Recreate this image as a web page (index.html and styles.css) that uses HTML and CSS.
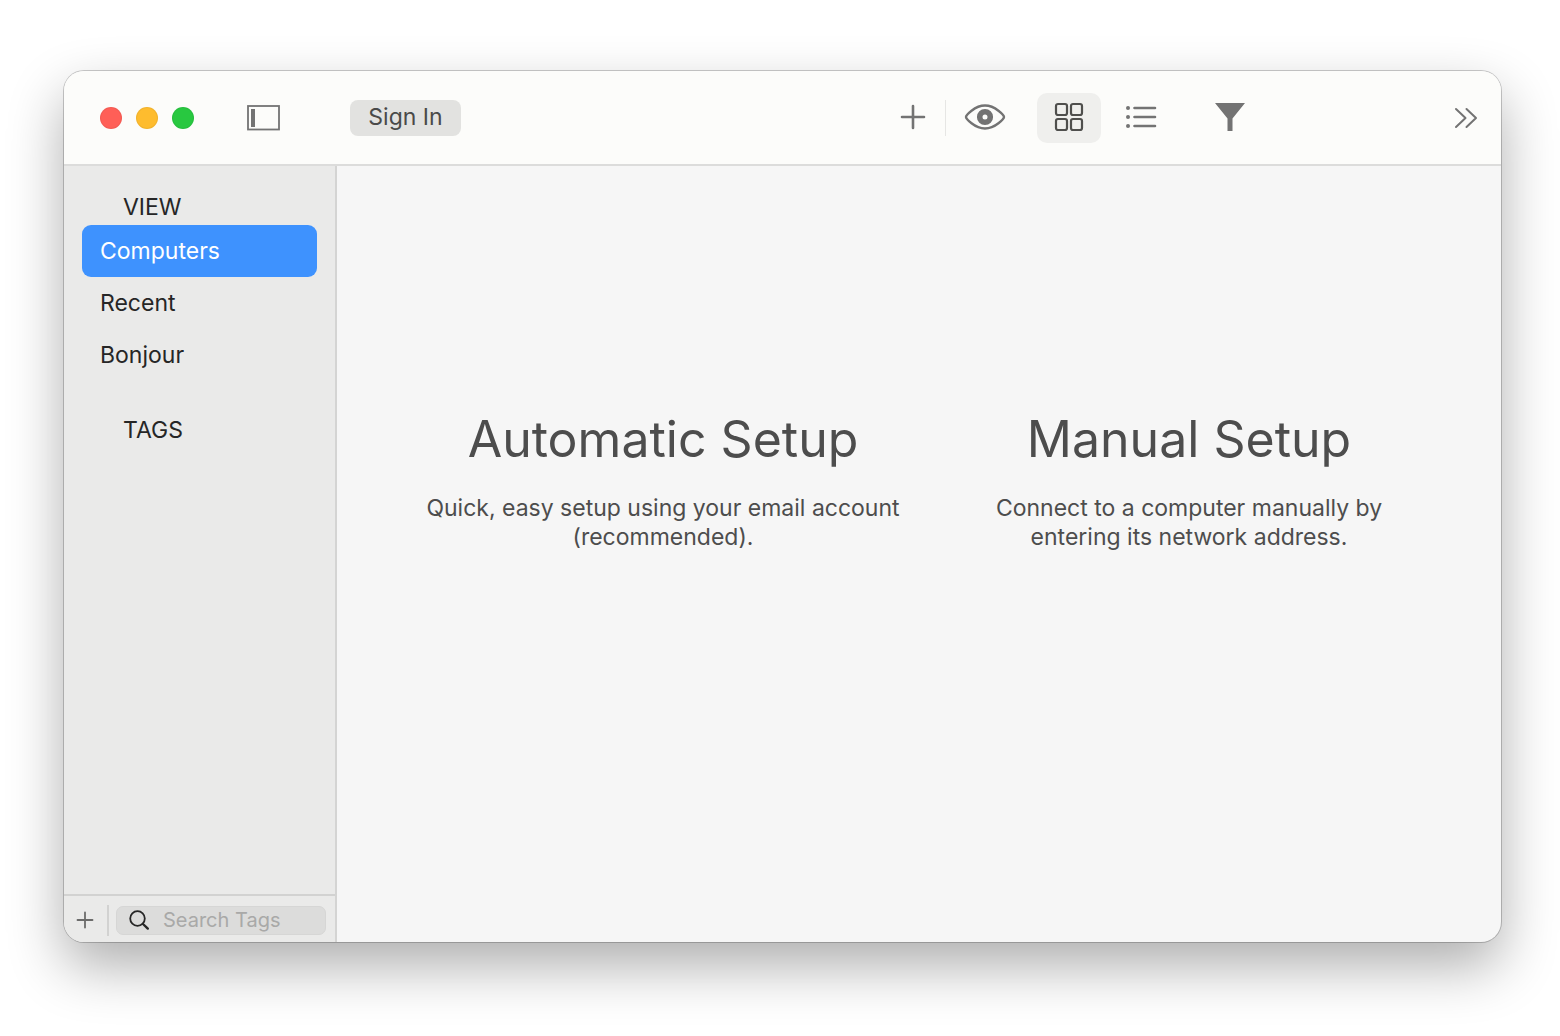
FILE: index.html
```html
<!DOCTYPE html>
<html lang="en">
<head>
<meta charset="utf-8">
<meta name="viewport" content="width=device-width, initial-scale=1">
<title>Computers</title>
<link rel="stylesheet" href="styles.css">
</head>
<body>
<div class="window">
  <header class="toolbar">
    <div class="lights">
      <button class="light light-close" type="button" aria-label="Close"></button>
      <button class="light light-minimize" type="button" aria-label="Minimize"></button>
      <button class="light light-zoom" type="button" aria-label="Zoom"></button>
    </div>
    <button class="tool tool-sidebar" type="button" aria-label="Toggle sidebar">
      <svg width="34" height="26" viewBox="0 0 34 26" fill="none"><rect x="1" y="1" width="31" height="23.500" stroke="#737373" stroke-width="1.800"/><rect x="4" y="4" width="4" height="18" fill="#737373"/></svg>
    </button>
    <button class="sign-in" type="button">Sign In</button>
    <div class="space-wide"></div>
    <button class="tool tool-small" type="button" aria-label="Add">
      <svg width="26" height="26" viewBox="0 0 26 26" fill="none" stroke="#737373" stroke-width="2.600" stroke-linecap="round"><path d="M13 2v22M2 13h22"/></svg>
    </button>
    <div class="divider"></div>
    <button class="tool tool-eye" type="button" aria-label="Observe">
      <svg width="42" height="28" viewBox="0 0 42 28" fill="none" stroke="#737373"><path d="M2 14C2 12.500 10.500 2.500 21 2.500S40 12.500 40 14 31.500 25.500 21 25.500 2 15.500 2 14Z" stroke-width="2.400"/><circle cx="21" cy="14" r="5.300" stroke-width="5.600"/></svg>
    </button>
    <button class="tool tool-view is-active" type="button" aria-label="Icon view" aria-pressed="true">
      <svg width="30" height="30" viewBox="0 0 30 30" fill="none" stroke="#4f4f4d" stroke-width="2.200"><rect x="2" y="2" width="11" height="11" rx="2"/><rect x="17" y="2" width="11" height="11" rx="2"/><rect x="2" y="17" width="11" height="11" rx="2"/><rect x="17" y="17" width="11" height="11" rx="2"/></svg>
    </button>
    <button class="tool tool-view" type="button" aria-label="List view" aria-pressed="false">
      <svg width="32" height="24" viewBox="0 0 32 24" fill="none" stroke="#737373" stroke-width="2.600" stroke-linecap="round"><path d="M9.500 3H30M9.500 12H30M9.500 21H30"/><path stroke-width="4" d="M3 3h.01M3 12h.01M3 21h.01"/></svg>
    </button>
    <button class="tool tool-filter" type="button" aria-label="Filter">
      <svg width="32" height="30" viewBox="0 0 32 30"><path fill="#737373" d="M1 1h30L18.500 16.500V29h-5V16.500Z"/></svg>
    </button>
    <div class="space-narrow"></div>
    <button class="tool tool-small" type="button" aria-label="More toolbar items">
      <svg width="24" height="24" viewBox="0 -2 24 24" fill="none" stroke="#737373" stroke-width="2" stroke-linecap="round" stroke-linejoin="round"><path d="M2 2l9.500 9L2 20M12.500 2l9.500 9-9.500 9"/></svg>
    </button>
  </header>
  <div class="content">
    <aside class="sidebar">
      <nav class="lists">
        <h2 class="list-title">VIEW</h2>
        <ul class="list">
          <li><a class="row is-selected" href="#computers" aria-current="page">Computers</a></li>
          <li><a class="row" href="#recent">Recent</a></li>
          <li><a class="row" href="#bonjour">Bonjour</a></li>
        </ul>
        <h2 class="list-title">TAGS</h2>
      </nav>
      <div class="tag-bar">
        <button class="tag-add" type="button" aria-label="Add tag">
          <svg width="18" height="18" viewBox="0 0 18 18" fill="none" stroke="#6b6b6a" stroke-width="1.800" stroke-linecap="round"><path d="M9 1.500v15M1.500 9h15"/></svg>
        </button>
        <label class="search">
          <svg width="22" height="22" viewBox="0 0 22 22" fill="none" stroke="#262626" stroke-linecap="round"><circle cx="9.500" cy="9.500" r="7.300" stroke-width="1.800"/><path stroke-width="2.400" d="M15 15l4.800 4.600"/></svg>
          <input class="search-input" type="text" placeholder="Search Tags" aria-label="Search Tags">
        </label>
      </div>
    </aside>
    <main class="setup">
      <section class="option">
        <h1 class="option-title">Automatic Setup</h1>
        <p class="option-text">Quick, easy setup using your email account (recommended).</p>
      </section>
      <section class="option">
        <h1 class="option-title">Manual Setup</h1>
        <p class="option-text">Connect to a computer manually by entering its network address.</p>
      </section>
    </main>
  </div>
</div>
</body>
</html>
```
FILE: styles.css
```css
* {
  box-sizing: border-box;
}

body {
  margin: 0;
  min-height: 100vh;
  padding: 71px 59px 94px 64px;
  display: flex;
  background: #fff;
  color: #262626;
  font: 23px/28px Inter, "Liberation Sans", sans-serif;
}

button {
  margin: 0;
  padding: 0;
  border: 0;
  background: none;
  color: inherit;
  font: inherit;
}

svg {
  display: block;
  flex: none;
}

.window {
  flex: 1;
  min-width: 0;
  display: flex;
  flex-direction: column;
  overflow: hidden;
  border-radius: 20px;
  background: #f6f6f6;
  box-shadow: 0 0 0 1px rgba(0, 0, 0, 0.2), 0 24px 56px rgba(0, 0, 0, 0.32);
}

.toolbar {
  display: flex;
  align-items: center;
  height: 95px;
  padding: 0 18px 0 36px;
  border-bottom: 2px solid #dcdcdb;
  background: #fcfcfa;
}

.lights {
  display: flex;
  gap: 14px;
}

.light {
  width: 22px;
  height: 22px;
  border-radius: 50%;
  box-shadow: inset 0 0 0 1px rgba(0, 0, 0, 0.05);
}

.light-close {
  background: #ff5f57;
}

.light-minimize {
  background: #febc2e;
}

.light-zoom {
  background: #28c840;
}

.tool {
  display: flex;
  flex: none;
  align-items: center;
  justify-content: center;
  height: 50px;
  padding-bottom: 2px;
}

.tool-sidebar {
  width: 34px;
  margin-left: 53px;
  padding-bottom: 0;
}

.sign-in {
  flex: none;
  width: 111px;
  height: 36px;
  margin-left: 69px;
  padding-bottom: 2px;
  border-radius: 8px;
  background: #e2e2e0;
  color: #4a4a49;
}

.space-wide {
  flex: 7 1 0;
}

.space-narrow {
  flex: 3 1 0;
}

.tool-small {
  width: 34px;
}

.divider {
  width: 1px;
  height: 36px;
  margin: 0 14px 0 15px;
  background: #e6e6e4;
}

.tool-eye {
  width: 50px;
  margin-right: 27px;
}

.tool-view {
  width: 64px;
  margin-right: 8px;
  border-radius: 10px;
}

.tool-view.is-active {
  background: #efefed;
}

.tool-filter {
  width: 66px;
  margin-left: 16px;
}

.content {
  flex: 1;
  display: flex;
}

.sidebar {
  flex: none;
  display: flex;
  flex-direction: column;
  width: 273px;
  border-right: 2px solid #d4d4d3;
  background: #eaeae9;
}

.lists {
  flex: 1;
  padding: 27px 18px;
}

.list-title {
  margin: 0 0 4px;
  padding-left: 41px;
  font-size: 23px;
  font-weight: 400;
}

.list {
  margin: 0 0 35px;
  padding: 0;
  list-style: none;
}

.row {
  display: block;
  padding: 12px 18px;
  border-radius: 9px;
  color: inherit;
  text-decoration: none;
}

.row.is-selected {
  background: #3e92fe;
  color: #fff;
}

.tag-bar {
  display: flex;
  align-items: center;
  height: 48px;
  padding: 2px 9px 0 0;
  border-top: 2px solid #d2d2d1;
}

.tag-add {
  display: flex;
  align-items: center;
  justify-content: center;
  width: 45px;
  height: 31px;
  padding-right: 2px;
  border-right: 2px solid #d2d2d1;
}

.search {
  flex: 1;
  min-width: 0;
  display: flex;
  align-items: center;
  gap: 13px;
  height: 29px;
  margin-left: 7px;
  padding: 0 11px;
  border: 1px solid #d6d6d5;
  border-radius: 7px;
  background: #dcdcdb;
}

.search-input {
  flex: 1;
  min-width: 0;
  padding: 0;
  border: 0;
  outline: 0;
  background: none;
  color: #262626;
  font: 20px/24px Inter, "Liberation Sans", sans-serif;
}

.search-input::placeholder {
  color: #a9a9a8;
  opacity: 1;
}

.setup {
  flex: 1;
  display: grid;
  grid-template-columns: 1fr 1fr;
  align-content: start;
  padding: 241px 49px 0 63px;
  color: #4d4d4d;
  text-align: center;
}

.option {
  padding: 0 24px;
}

.option-title {
  margin: 0 0 23px;
  font-size: 50px;
  font-weight: 400;
  line-height: 64px;
}

.option-text {
  margin: 0;
  line-height: 29px;
}
```
